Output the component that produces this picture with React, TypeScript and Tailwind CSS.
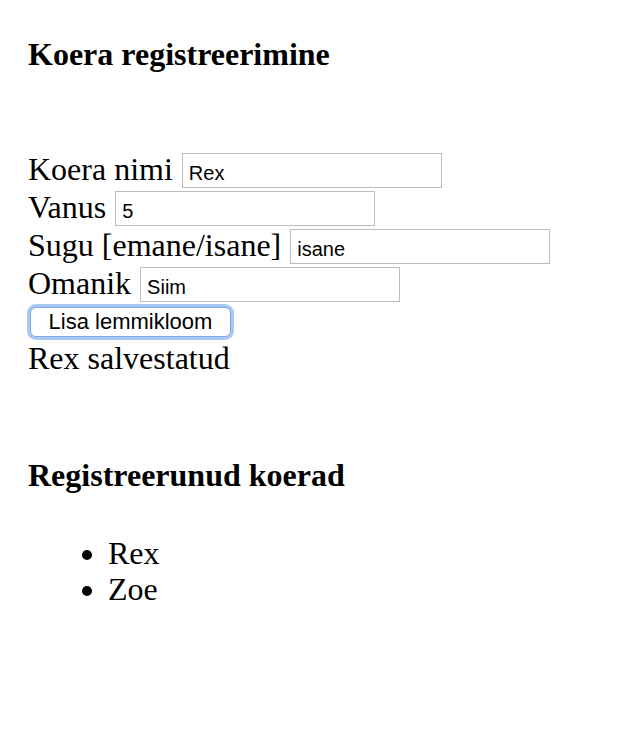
import * as React from "react";

const serif = "font-['Liberation_Serif','Times_New_Roman',serif]";
const inputCls =
  "ml-[1px] box-border h-[35px] w-[260px] border border-[#bdbdbd] bg-white pl-[6px] pr-[6px] pt-[7px] pb-[1px] align-baseline text-[20px] leading-[24px] text-black outline-none font-['Liberation_Sans',Arial,sans-serif]";

function Field(props: { label: string; value: string }) {
  return (
    <div className="h-[38px] whitespace-nowrap leading-[38px]">
      {props.label}{" "}
      <input type="text" defaultValue={props.value} className={inputCls} />
    </div>
  );
}

export default function App() {
  const dogs = ["Rex", "Zoe"];
  return (
    <div className={`min-h-[736px] w-[636px] bg-white pl-[28px] pt-[36px] text-[32px] text-black ${serif}`}>
      <h4 className="font-bold leading-[36.8px]">Koera registreerimine</h4>

      <form className="mt-[77.6px]" onSubmit={(e) => e.preventDefault()}>
        <Field label="Koera nimi" value="Rex" />
        <Field label="Vanus" value="5" />
        <Field label="Sugu [emane/isane]" value="isane" />
        <Field label="Omanik" value="Siim" />
        <div className="pb-[3px] pl-[2px] pt-[5px]">
          <button
            type="submit"
            className="box-border block h-[30px] w-[201px] rounded-[6px] border border-[#7fa9e4] bg-white text-center text-[22px] leading-[28px] text-black shadow-[0_0_0_3px_#a9c9f5] font-['Liberation_Sans',Arial,sans-serif]"
          >
            Lisa lemmikloom
          </button>
        </div>
      </form>
      <div className="leading-[36.8px]">Rex salvestatud</div>

      <h4 className="mt-[80px] font-bold leading-[36.8px]">Registreerunud koerad</h4>
      <ul className="mt-[42.5px] list-disc pl-[80px]">
        {dogs.map((d) => (
          <li key={d} className="leading-[35.5px]">
            {d}
          </li>
        ))}
      </ul>
    </div>
  );
}
